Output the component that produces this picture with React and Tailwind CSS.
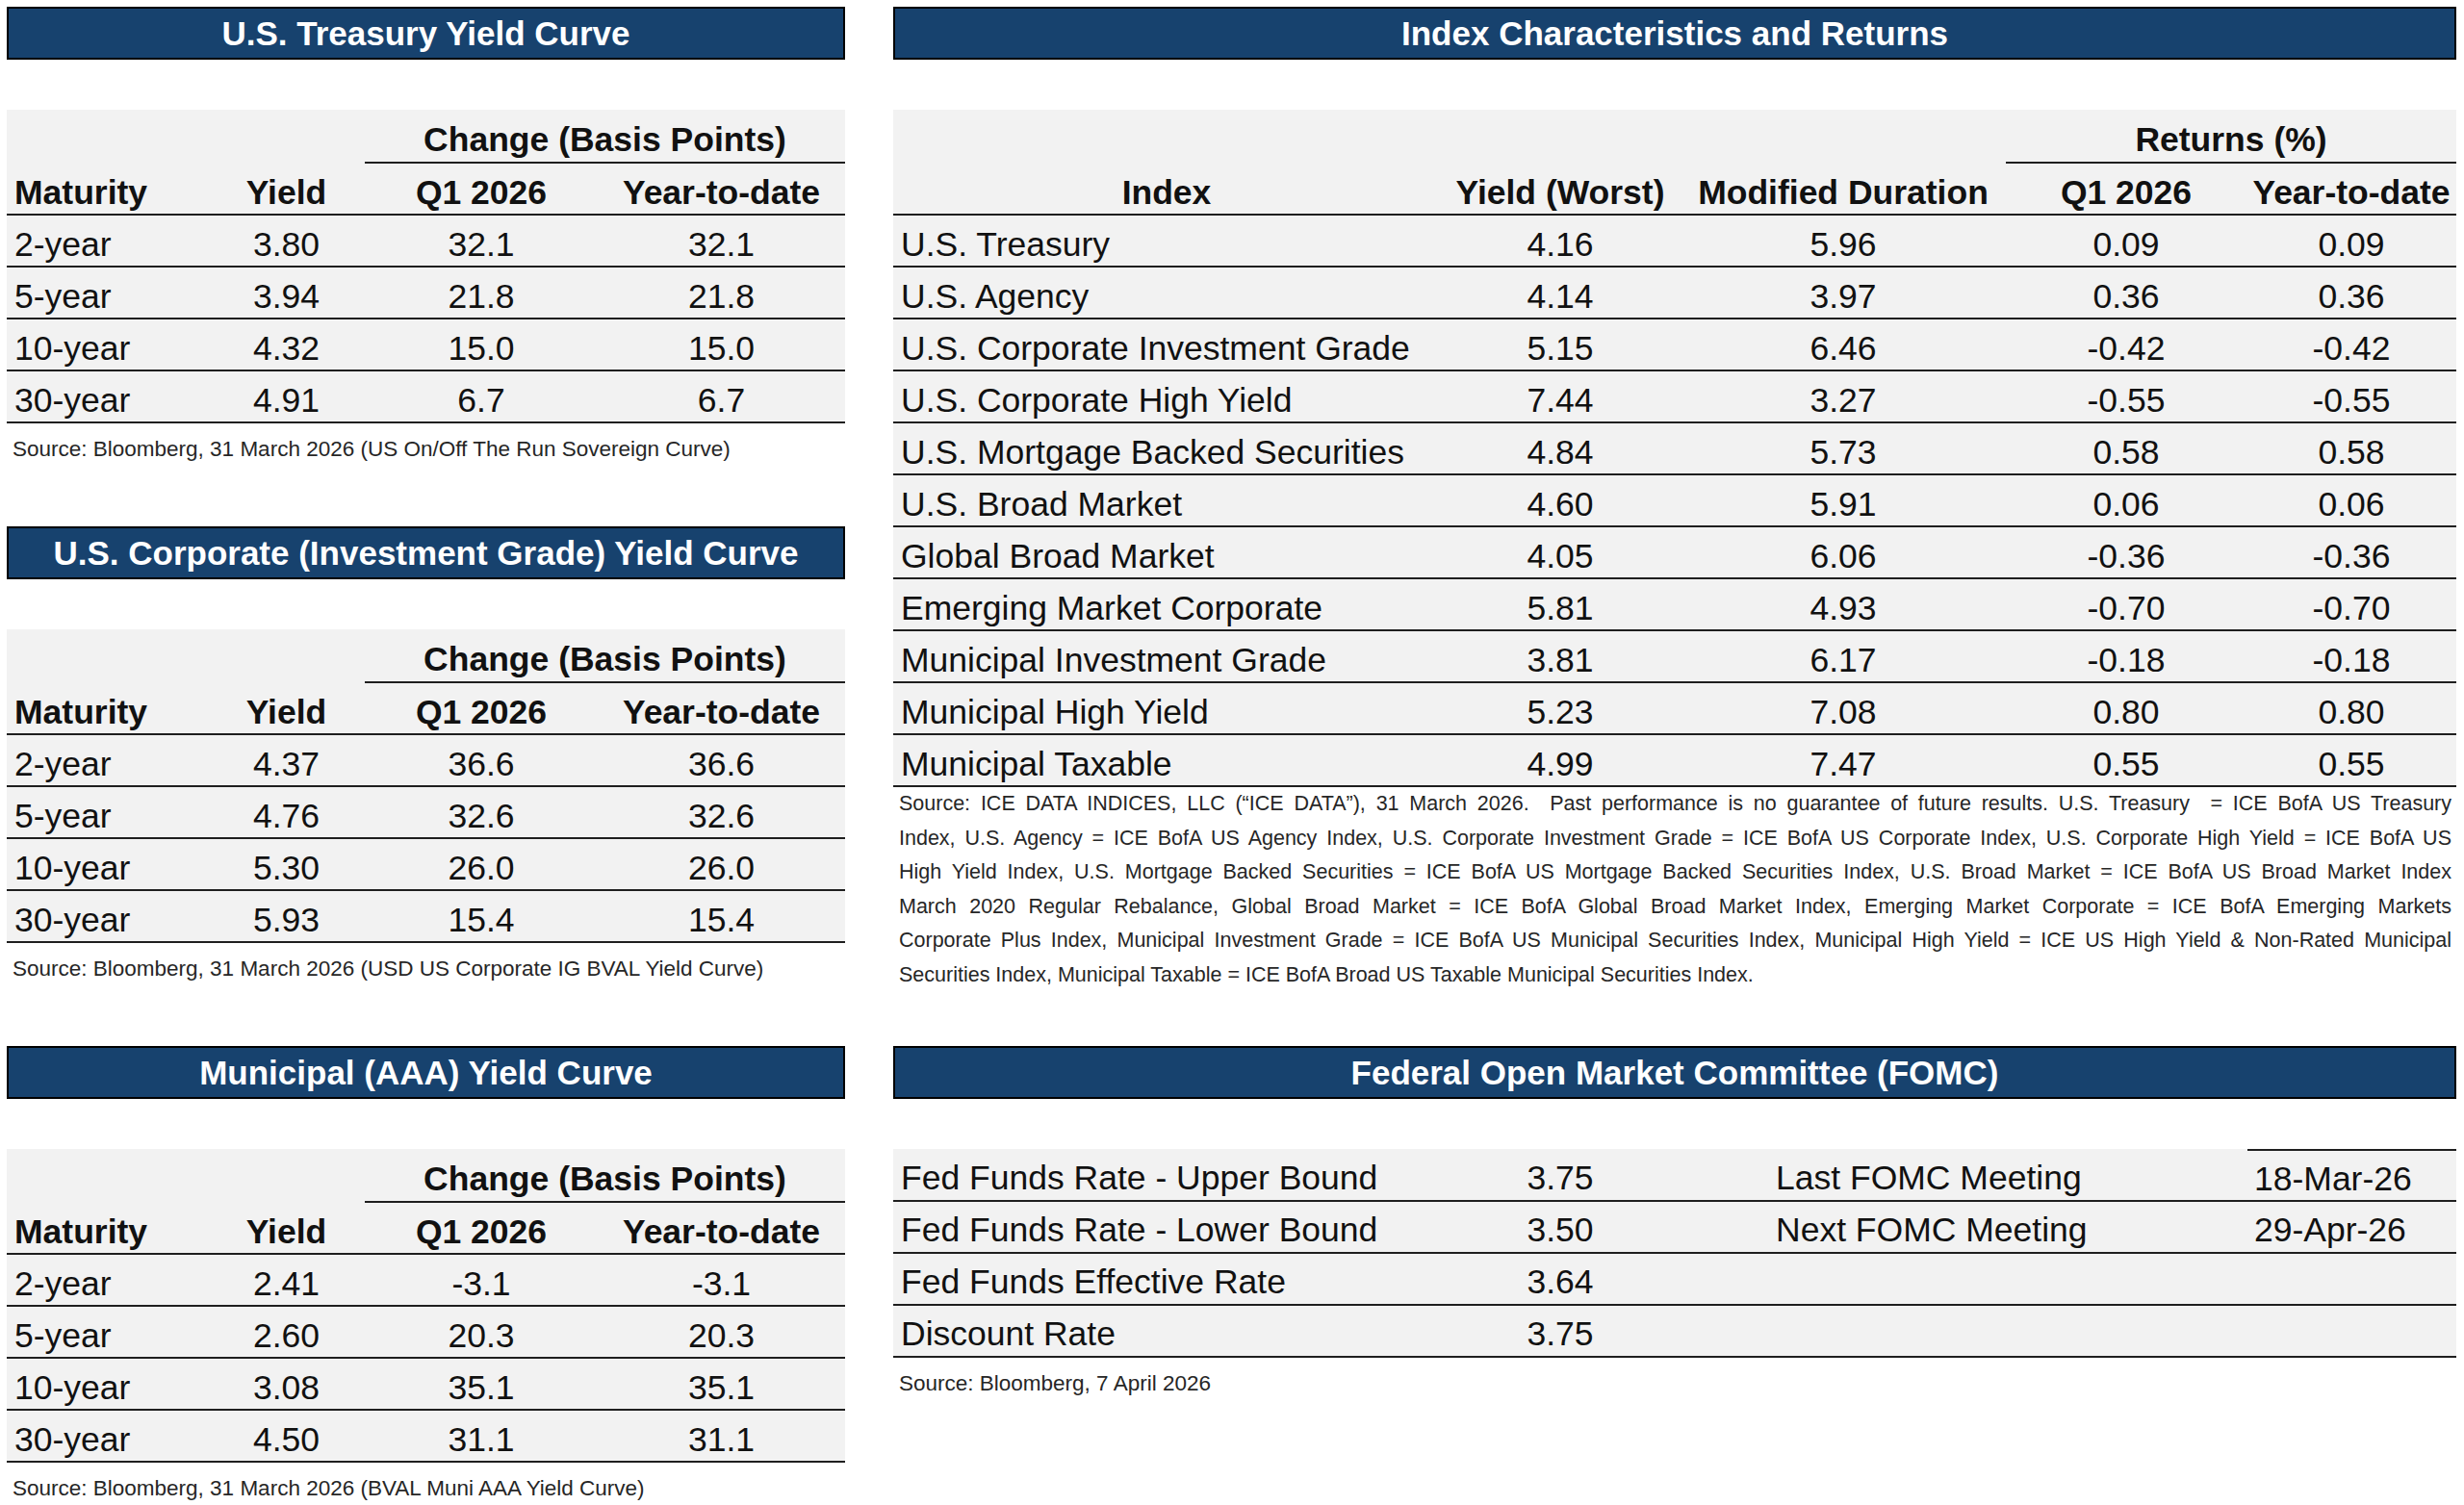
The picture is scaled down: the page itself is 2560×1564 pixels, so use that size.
const treasury = [
  ['2-year', '3.80', '32.1', '32.1'],
  ['5-year', '3.94', '21.8', '21.8'],
  ['10-year', '4.32', '15.0', '15.0'],
  ['30-year', '4.91', '6.7', '6.7'],
];

const corporate = [
  ['2-year', '4.37', '36.6', '36.6'],
  ['5-year', '4.76', '32.6', '32.6'],
  ['10-year', '5.30', '26.0', '26.0'],
  ['30-year', '5.93', '15.4', '15.4'],
];

const municipal = [
  ['2-year', '2.41', '-3.1', '-3.1'],
  ['5-year', '2.60', '20.3', '20.3'],
  ['10-year', '3.08', '35.1', '35.1'],
  ['30-year', '4.50', '31.1', '31.1'],
];

const indices = [
  ['U.S. Treasury', '4.16', '5.96', '0.09', '0.09'],
  ['U.S. Agency', '4.14', '3.97', '0.36', '0.36'],
  ['U.S. Corporate Investment Grade', '5.15', '6.46', '-0.42', '-0.42'],
  ['U.S. Corporate High Yield', '7.44', '3.27', '-0.55', '-0.55'],
  ['U.S. Mortgage Backed Securities', '4.84', '5.73', '0.58', '0.58'],
  ['U.S. Broad Market', '4.60', '5.91', '0.06', '0.06'],
  ['Global Broad Market', '4.05', '6.06', '-0.36', '-0.36'],
  ['Emerging Market Corporate', '5.81', '4.93', '-0.70', '-0.70'],
  ['Municipal Investment Grade', '3.81', '6.17', '-0.18', '-0.18'],
  ['Municipal High Yield', '5.23', '7.08', '0.80', '0.80'],
  ['Municipal Taxable', '4.99', '7.47', '0.55', '0.55'],
];

// footnote lines kept as in the source so the wrap matches
const footnote = [
  'Source: ICE DATA INDICES, LLC (“ICE DATA”), 31 March 2026.  Past performance is no guarantee of future results. U.S. Treasury  = ICE BofA US Treasury',
  'Index, U.S. Agency = ICE BofA US Agency Index, U.S. Corporate Investment Grade = ICE BofA US Corporate Index, U.S. Corporate High Yield = ICE BofA US',
  'High Yield Index, U.S. Mortgage Backed Securities = ICE BofA US Mortgage Backed Securities Index, U.S. Broad Market = ICE BofA US Broad Market Index',
  'March 2020 Regular Rebalance, Global Broad Market = ICE BofA Global Broad Market Index, Emerging Market Corporate = ICE BofA Emerging Markets',
  'Corporate Plus Index, Municipal Investment Grade = ICE BofA US Municipal Securities Index, Municipal High Yield = ICE US High Yield & Non-Rated Municipal',
  'Securities Index, Municipal Taxable = ICE BofA Broad US Taxable Municipal Securities Index.',
];

const fomc = [
  ['Fed Funds Rate - Upper Bound', '3.75', 'Last FOMC Meeting', '18-Mar-26'],
  ['Fed Funds Rate - Lower Bound', '3.50', 'Next FOMC Meeting', '29-Apr-26'],
  ['Fed Funds Effective Rate', '3.64', '', ''],
  ['Discount Rate', '3.75', '', ''],
];

function TitleBar({ children }) {
  return (
    <div className="h-[55px] bg-[#17426e] border-2 border-black flex items-center justify-center text-white font-bold text-[35px] leading-none">
      {children}
    </div>
  );
}

function CurveTable({ title, rows, source }) {
  return (
    <div className="w-[871px]">
      <TitleBar>{title}</TitleBar>
      <div className="mt-[52px] bg-[#f2f2f2] text-[35.5px] text-[#111]">
        <div className="flex h-[56px]">
          <div className="w-[372px]" />
          <div className="flex-1 border-b-2 border-[#1f1f1f] flex items-center justify-center pt-[9px] font-bold">
            Change (Basis Points)
          </div>
        </div>
        <div className="flex h-[54px] border-b-2 border-[#1f1f1f] items-center pt-[9px] font-bold">
          <div className="w-[209px] pl-[8px]">Maturity</div>
          <div className="w-[163px] text-center">Yield</div>
          <div className="w-[242px] text-center">Q1 2026</div>
          <div className="w-[257px] text-center">Year-to-date</div>
        </div>
        {rows.map((r) => (
          <div key={r[0]} className="flex h-[54px] border-b-2 border-[#1f1f1f] items-center pt-[9px]">
            <div className="w-[209px] pl-[8px]">{r[0]}</div>
            <div className="w-[163px] text-center">{r[1]}</div>
            <div className="w-[242px] text-center">{r[2]}</div>
            <div className="w-[257px] text-center">{r[3]}</div>
          </div>
        ))}
      </div>
      <div className="h-[54px] flex items-center pl-[6px] text-[22.5px] text-[#262626]">{source}</div>
    </div>
  );
}

function IndexTable() {
  return (
    <div>
      <TitleBar>Index Characteristics and Returns</TitleBar>
      <div className="mt-[52px] bg-[#f2f2f2] text-[35.5px] text-[#111]">
        <div className="flex h-[56px]">
          <div className="w-[1156px]" />
          <div className="flex-1 border-b-2 border-[#1f1f1f] flex items-center justify-center pt-[9px] font-bold">
            Returns (%)
          </div>
        </div>
        <div className="flex h-[54px] border-b-2 border-[#1f1f1f] items-center pt-[9px] font-bold">
          <div className="w-[568px] text-center">Index</div>
          <div className="w-[250px] text-center">Yield (Worst)</div>
          <div className="w-[338px] text-center">Modified Duration</div>
          <div className="w-[250px] text-center">Q1 2026</div>
          <div className="w-[218px] text-center">Year-to-date</div>
        </div>
        {indices.map((r) => (
          <div key={r[0]} className="flex h-[54px] border-b-2 border-[#1f1f1f] items-center pt-[9px]">
            <div className="w-[568px] pl-[8px]">{r[0]}</div>
            <div className="w-[250px] text-center">{r[1]}</div>
            <div className="w-[338px] text-center">{r[2]}</div>
            <div className="w-[250px] text-center">{r[3]}</div>
            <div className="w-[218px] text-center">{r[4]}</div>
          </div>
        ))}
      </div>
      <div className="pl-[6px] pr-[5px] text-[21.5px] leading-[35.6px] text-[#262626] whitespace-pre">
        {footnote.map((line, i) => (
          <div
            key={i}
            className={i < footnote.length - 1 ? 'text-justify [text-align-last:justify]' : ''}
          >
            {line}
          </div>
        ))}
      </div>
    </div>
  );
}

function FomcTable() {
  return (
    <div>
      <TitleBar>Federal Open Market Committee (FOMC)</TitleBar>
      <div className="mt-[52px] bg-[#f2f2f2] text-[35.5px] text-[#111]">
        {fomc.map((r, i) => (
          <div
            key={r[0]}
            className={`flex border-b-2 border-[#1f1f1f] items-center ${i === 0 ? 'h-[55px]' : 'h-[54px]'}`}
          >
            <div className="w-[568px] pl-[8px] pt-[9px]">{r[0]}</div>
            <div className="w-[250px] text-center pt-[9px]">{r[1]}</div>
            <div className="w-[589px] pl-[99px] pt-[9px]">{r[2]}</div>
            <div
              className={`w-[217px] h-full flex items-center pl-[7px] pt-[9px] ${i === 0 ? 'border-t-2 border-[#1f1f1f]' : ''}`}
            >
              {r[3]}
            </div>
          </div>
        ))}
      </div>
      <div className="h-[54px] flex items-center pl-[6px] text-[22.5px] text-[#262626]">
        Source: Bloomberg, 7 April 2026
      </div>
    </div>
  );
}

export default function App() {
  return (
    <div
      className="w-[2560px] h-[1564px] bg-white overflow-hidden flex gap-[50px] pl-[7px] pt-[7px]"
      style={{ fontFamily: '"Liberation Sans", Arial, sans-serif' }}
    >
      <div className="w-[871px] flex flex-col gap-[53px]">
        <CurveTable
          title="U.S. Treasury Yield Curve"
          rows={treasury}
          source="Source: Bloomberg, 31 March 2026 (US On/Off The Run Sovereign Curve)"
        />
        <CurveTable
          title="U.S. Corporate (Investment Grade) Yield Curve"
          rows={corporate}
          source="Source: Bloomberg, 31 March 2026 (USD US Corporate IG BVAL Yield Curve)"
        />
        <CurveTable
          title="Municipal (AAA) Yield Curve"
          rows={municipal}
          source="Source: Bloomberg, 31 March 2026 (BVAL Muni AAA Yield Curve)"
        />
      </div>
      <div className="w-[1624px] flex flex-col gap-[55px]">
        <IndexTable />
        <FomcTable />
      </div>
    </div>
  );
}
